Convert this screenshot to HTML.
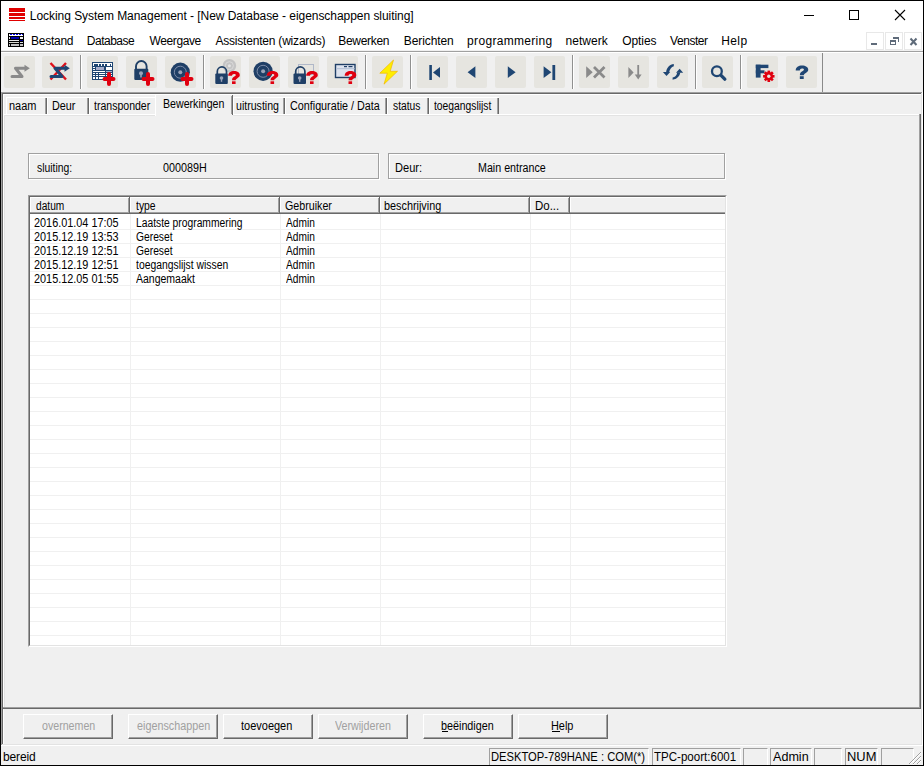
<!DOCTYPE html>
<html><head><meta charset="utf-8">
<style>
*{margin:0;padding:0;box-sizing:border-box}
html,body{width:924px;height:766px;overflow:hidden;background:#F0F0F0;position:relative;font-family:"Liberation Sans",sans-serif}
.a{position:absolute}
.t{position:absolute;white-space:pre;font-family:"Liberation Sans",sans-serif}
.tb{position:absolute;width:31px;height:32px;background:#E6E5E0;border-radius:2px}
.sep{position:absolute;width:1px;top:55px;height:34px;background:#909090;box-shadow:1px 0 0 #FFF}
.tab{position:absolute;top:97px;height:17px;background:#F0F0F0;border-top:1px solid #FFF;border-left:1px solid #FFF}
.tab i{position:absolute;top:0;bottom:0;width:1px;right:0;background:#696969}
.tab b{position:absolute;top:0;bottom:0;width:1px;right:1px;background:#A0A0A0}
.btn{position:absolute;top:714px;width:90px;height:25px;background:#F0F0F0;border-top:1px solid #FFF;border-left:1px solid #FFF;border-right:1px solid #696969;border-bottom:1px solid #696969}
.btn:after{content:"";position:absolute;left:0;top:0;right:0;bottom:0;border-right:1px solid #A0A0A0;border-bottom:1px solid #A0A0A0}
.etch{position:absolute;border:1px solid #A0A0A0;box-shadow:1px 1px 0 #FFF, inset 1px 1px 0 #FFF}
.sp{position:absolute;top:748px;height:17px;border-top:1px solid #A0A0A0;border-left:1px solid #A0A0A0;border-right:1px solid #FFF}
</style></head><body>
<!-- window frame -->
<div class="a" style="left:0;top:0;width:924px;height:50px;background:#FFF"></div>
<div class="a" style="left:0;top:50px;width:924px;height:1px;background:#F0F0F0"></div>
<div class="a" style="left:0;top:51px;width:924px;height:1px;background:#A0A0A0"></div>
<div class="a" style="left:0;top:52px;width:924px;height:1px;background:#FFF"></div>

<!-- MDI client edge -->
<div class="a" style="left:1px;top:92px;width:921px;height:1px;background:#A0A0A0"></div>
<div class="a" style="left:1px;top:93px;width:920px;height:1px;background:#696969"></div>
<div class="a" style="left:1px;top:92px;width:1px;height:653px;background:#A0A0A0"></div>
<div class="a" style="left:2px;top:93px;width:1px;height:651px;background:#696969"></div>
<div class="a" style="left:3px;top:94px;width:918px;height:1px;background:#FFF"></div>
<div class="a" style="left:3px;top:94px;width:1px;height:650px;background:#FFF"></div>
<div class="a" style="left:921px;top:93px;width:1px;height:652px;background:#E3E3E3"></div>
<div class="a" style="left:922px;top:92px;width:1px;height:654px;background:#FFF"></div>
<div class="a" style="left:2px;top:744px;width:920px;height:1px;background:#E3E3E3"></div>

<!-- tab page -->
<div class="a" style="left:4px;top:115px;width:915px;height:1px;background:#E3E3E3"></div>
<div class="a" style="left:4px;top:115px;width:1px;height:592px;background:#E3E3E3"></div>
<div class="a" style="left:3px;top:114px;width:917px;height:1px;background:#FFF"></div>
<div class="a" style="left:919px;top:114px;width:1px;height:594px;background:#A0A0A0"></div>
<div class="a" style="left:920px;top:114px;width:1px;height:595px;background:#696969"></div>
<div class="a" style="left:3px;top:707px;width:917px;height:1px;background:#A0A0A0"></div>
<div class="a" style="left:3px;top:708px;width:918px;height:1px;background:#696969"></div>

<!-- tabs -->
<div class="tab" style="left:6px;width:41px"><b></b><i></i></div>
<div class="tab" style="left:47px;width:42px"><b></b><i></i></div>
<div class="tab" style="left:89px;width:69px"><b></b><i></i></div>
<div class="tab" style="left:233px;width:52px"><b></b><i></i></div>
<div class="tab" style="left:285px;width:102px"><b></b><i></i></div>
<div class="tab" style="left:387px;width:42px"><b></b><i></i></div>
<div class="tab" style="left:429px;width:70px"><b></b><i></i></div>
<div class="tab" style="left:155px;top:94px;width:78px;height:22px;border-bottom:0"><b style="top:1px;bottom:2px"></b><i style="top:0;bottom:1px"></i></div>

<!-- info boxes -->
<div class="etch" style="left:28px;top:153px;width:351px;height:26px"></div>
<div class="etch" style="left:388px;top:153px;width:337px;height:26px"></div>

<!-- list view -->
<div class="a" style="left:28px;top:195px;width:699px;height:452px;background:#FFF;border-top:1px solid #A0A0A0;border-left:1px solid #A0A0A0;border-right:1px solid #FFF;border-bottom:1px solid #FFF"></div>
<div class="a" style="left:29px;top:196px;width:697px;height:450px;border-top:1px solid #696969;border-left:1px solid #696969;border-right:1px solid #E3E3E3;border-bottom:1px solid #E3E3E3"></div>
<svg class="a" style="left:0;top:0" width="924" height="766" shape-rendering="crispEdges">
  <g fill="#F0F0F0">
    <!-- grid horizontal -->
    <path d="M30 229h695v1h-695zM30 243h695v1h-695zM30 257h695v1h-695zM30 271h695v1h-695zM30 285h695v1h-695zM30 299h695v1h-695zM30 313h695v1h-695zM30 327h695v1h-695zM30 341h695v1h-695zM30 355h695v1h-695zM30 369h695v1h-695zM30 383h695v1h-695zM30 397h695v1h-695zM30 411h695v1h-695zM30 425h695v1h-695zM30 439h695v1h-695zM30 453h695v1h-695zM30 467h695v1h-695zM30 481h695v1h-695zM30 495h695v1h-695zM30 509h695v1h-695zM30 523h695v1h-695zM30 537h695v1h-695zM30 551h695v1h-695zM30 565h695v1h-695zM30 579h695v1h-695zM30 593h695v1h-695zM30 607h695v1h-695zM30 621h695v1h-695zM30 635h695v1h-695z"/>
    <path d="M130 214h1v431h-1zM280 214h1v431h-1zM380 214h1v431h-1zM530 214h1v431h-1zM570 214h1v431h-1z"/>
  </g>
  <!-- header -->
  <rect x="30" y="197" width="695" height="16" fill="#F0F0F0"/>
  <g fill="#FFF"><path d="M30 197h695v1h-695zM30 197h1v15h-1zM130 197h1v15h-1zM280 197h1v15h-1zM380 197h1v15h-1zM530 197h1v15h-1zM570 197h1v15h-1z"/></g>
  <g fill="#A0A0A0"><path d="M30 212h695v1h-695zM128 198h1v14h-1zM278 198h1v14h-1zM378 198h1v14h-1zM528 198h1v14h-1zM568 198h1v14h-1z"/></g>
  <g fill="#696969"><path d="M30 213h695v1h-695zM129 197h1v16h-1zM279 197h1v16h-1zM379 197h1v16h-1zM529 197h1v16h-1zM569 197h1v16h-1z"/></g>
</svg>

<!-- buttons -->
<div class="btn" style="left:23px"></div>
<div class="btn" style="left:128px"></div>
<div class="btn" style="left:223px"></div>
<div class="btn" style="left:318px"></div>
<div class="btn" style="left:423px"></div>
<div class="btn" style="left:518px"></div>
<div class="a" style="left:442px;top:731px;width:6px;height:1px;background:#000"></div>
<div class="a" style="left:552px;top:731px;width:8px;height:1px;background:#000"></div>

<!-- status bar -->
<div class="a" style="left:1px;top:745px;width:922px;height:1px;background:#FFF"></div>
<div class="sp" style="left:489px;width:160px"></div>
<div class="sp" style="left:652px;width:89px"></div>
<div class="sp" style="left:743px;width:25px"></div>
<div class="sp" style="left:770px;width:42px"></div>
<div class="sp" style="left:814px;width:28px"></div>
<div class="sp" style="left:845px;width:33px"></div>
<div class="sp" style="left:881px;width:33px"></div>

<!-- toolbar -->
<div class="tb" style="left:4px;top:56px"></div>
<div class="tb" style="left:42px;top:56px"></div>
<div class="sep" style="left:80px"></div>
<div class="tb" style="left:87px;top:56px"></div>
<div class="tb" style="left:126px;top:56px"></div>
<div class="tb" style="left:165px;top:56px"></div>
<div class="sep" style="left:203px"></div>
<div class="tb" style="left:210px;top:56px"></div>
<div class="tb" style="left:249px;top:56px"></div>
<div class="tb" style="left:288px;top:56px"></div>
<div class="tb" style="left:327px;top:56px"></div>
<div class="sep" style="left:365px"></div>
<div class="tb" style="left:372px;top:56px"></div>
<div class="sep" style="left:410px"></div>
<div class="tb" style="left:417px;top:56px"></div>
<div class="tb" style="left:456px;top:56px"></div>
<div class="tb" style="left:495px;top:56px"></div>
<div class="tb" style="left:534px;top:56px"></div>
<div class="sep" style="left:572px"></div>
<div class="tb" style="left:579px;top:56px"></div>
<div class="tb" style="left:618px;top:56px"></div>
<div class="tb" style="left:657px;top:56px"></div>
<div class="sep" style="left:695px"></div>
<div class="tb" style="left:702px;top:56px"></div>
<div class="sep" style="left:740px"></div>
<div class="tb" style="left:747px;top:56px"></div>
<div class="tb" style="left:786px;top:56px"></div>
<div class="a" style="left:822px;top:53px;width:1px;height:39px;background:#8A8A8A"></div>

<!-- ICONS -->
<svg class="a" style="left:0;top:0" width="924" height="766">
  <!-- title icon -->
  <g fill="#E00000" shape-rendering="crispEdges">
    <rect x="9" y="8" width="16" height="4"/>
    <rect x="9" y="13" width="16" height="3"/>
    <rect x="9" y="17" width="16" height="2"/>
    <rect x="9" y="20" width="16" height="1"/>
  </g>
  <!-- title buttons -->
  <g shape-rendering="crispEdges">
    <rect x="804" y="15" width="10" height="1" fill="#000"/>
    <rect x="849.5" y="10.5" width="9" height="9" fill="none" stroke="#000" stroke-width="1"/>
  </g>
  <path d="M895 10L905 20M905 10L895 20" stroke="#000" stroke-width="1.1"/>
  <!-- menu icon -->
  <g shape-rendering="crispEdges">
    <rect x="8" y="33" width="16" height="14" fill="#000"/>
    <rect x="9" y="34" width="14" height="2" fill="#FFF"/>
    <rect x="10" y="34" width="2" height="1" fill="#0000F0"/><rect x="13" y="34" width="2" height="1" fill="#0000F0"/><rect x="16" y="34" width="2" height="1" fill="#0000F0"/><rect x="19" y="34" width="2" height="1" fill="#0000F0"/><rect x="22" y="34" width="1" height="1" fill="#0000F0"/>
    <rect x="9" y="37" width="1" height="2" fill="#E8E8F0"/>
    <rect x="11" y="37" width="8" height="2" fill="#0000B0"/>
    <rect x="20" y="37" width="3" height="2" fill="#F4F4F4"/>
    <rect x="9" y="40" width="10" height="1" fill="#E8E8E8"/>
    <rect x="20" y="40" width="3" height="1" fill="#000090"/>
    <rect x="9" y="42" width="10" height="1" fill="#D8D8D0"/>
    <rect x="20" y="42" width="3" height="1" fill="#E0E0E0"/>
    <rect x="9" y="44" width="1" height="2" fill="#C8C8C8"/>
    <rect x="11" y="44" width="8" height="2" fill="#C0C0C0"/>
    <rect x="20" y="44" width="3" height="2" fill="#C0C0C0"/>
  </g>
  <!-- MDI buttons -->
  <g shape-rendering="crispEdges">
    <rect x="866.5" y="32.5" width="17" height="17" fill="none" stroke="#E8E8E8"/>
    <rect x="885.5" y="32.5" width="17" height="17" fill="none" stroke="#E8E8E8"/>
    <rect x="904.5" y="32.5" width="17" height="17" fill="none" stroke="#E8E8E8"/>
    <rect x="871" y="43" width="6" height="2" fill="#5F6B7A"/>
    <rect x="890" y="40" width="6" height="2" fill="#5F6B7A"/>
    <rect x="890" y="40" width="1" height="5" fill="#5F6B7A"/>
    <rect x="895" y="40" width="1" height="5" fill="#5F6B7A"/>
    <rect x="890" y="44" width="6" height="1" fill="#5F6B7A"/>
    <rect x="893" y="37" width="6" height="2" fill="#5F6B7A"/>
    <rect x="898" y="37" width="1" height="5" fill="#5F6B7A"/>
  </g>
  <path d="M910.5 38.5l6 6.5M916.5 38.5l-6 6.5" stroke="#5F6B7A" stroke-width="2"/>

  <!-- toolbar icons -->
  <!-- 1: gray S arrow -->
  <g stroke="#8A8A8A" stroke-width="3" fill="none" stroke-linecap="round" stroke-linejoin="round">
    <path d="M12 76.5H22L15.5 68.3H25"/>
  </g>
  <path d="M24.5 64.8L29.8 68.3L24.5 71.8Z" fill="#8A8A8A"/>
  <!-- 2: S arrow navy with red X -->
  <path d="M50.5 63L66 79.5M66 63L50.5 79.5" stroke="#E0101A" stroke-width="2.4"/>
  <g stroke="#1F4673" stroke-width="3" fill="none" stroke-linecap="round" stroke-linejoin="round">
    <path d="M51 76.5H62L55 68.3H65"/>
  </g>
  <path d="M64.5 64.8L69.8 68.3L64.5 71.8Z" fill="#1F4673"/>
  <!-- 3: table + -->
  <g shape-rendering="crispEdges">
    <rect x="92" y="62" width="21" height="18" fill="#1F4673"/>
    <rect x="93" y="63" width="19" height="3" fill="#FFF"/>
    <rect x="94" y="64" width="1.5" height="1.5" fill="#1F4673"/><rect x="96.3" y="64" width="2" height="1.5" fill="#1F4673"/><rect x="99.2" y="64" width="2" height="1.5" fill="#1F4673"/><rect x="102.1" y="64" width="2" height="1.5" fill="#1F4673"/><rect x="105" y="64" width="2" height="1.5" fill="#1F4673"/><rect x="109.6" y="64" width="1.5" height="1.5" fill="#1F4673"/>
    <rect x="93" y="67" width="2" height="1" fill="#FFF"/>
    <rect x="96" y="67" width="8" height="3" fill="#A8AECB"/>
    <rect x="106" y="67" width="6" height="3" fill="#FFF"/>
    <rect x="93" y="69" width="2" height="1" fill="#FFF"/>
    <rect x="93" y="71" width="12" height="1" fill="#FFF"/>
    <rect x="106" y="71" width="6" height="1" fill="#A8AECB"/>
    <rect x="93" y="73" width="2" height="1" fill="#FFF"/><rect x="96" y="73" width="2" height="1" fill="#FFF"/><rect x="99" y="73" width="6" height="1" fill="#FFF"/><rect x="106" y="73" width="6" height="1" fill="#FFF"/>
    <rect x="93" y="75" width="2" height="1" fill="#FFF"/><rect x="96" y="75" width="2" height="1" fill="#FFF"/><rect x="99" y="75" width="6" height="1" fill="#FFF"/><rect x="106" y="75" width="6" height="1" fill="#FFF"/>
    <rect x="93" y="77" width="2" height="2" fill="#FFF"/><rect x="96" y="77" width="2" height="2" fill="#FFF"/><rect x="99" y="77" width="5" height="2" fill="#FFF"/>
  </g>
  <g id="plus">
    <path d="M104.5 79H113.5M109 74V84" stroke="#E0000F" stroke-width="4" stroke-linecap="round"/>
  </g>
  <!-- 4: lock + -->
  <path d="M136 69V66.3A5.3 5.3 0 0 1 146.6 66.3V69" stroke="#1F3F66" stroke-width="1.9" fill="none"/>
  <rect x="134.3" y="68.7" width="14" height="11.3" rx="1" fill="#1F3F66"/>
  <circle cx="141" cy="73.3" r="2" fill="#9AA3B8"/><rect x="140.2" y="74" width="1.6" height="3.5" fill="#9AA3B8"/>
  <path d="M143.5 79H152.5M148 74V84" stroke="#E0000F" stroke-width="4" stroke-linecap="round"/>
  <!-- 5: target + -->
  <circle cx="180.3" cy="72.2" r="9.6" fill="#1F3F66"/>
  <circle cx="180.3" cy="72.2" r="6" fill="none" stroke="#7D8CA8" stroke-width="1"/>
  <circle cx="180.3" cy="72.2" r="2" fill="#9AA3B8"/>
  <path d="M182.5 79H191.5M187 74V84" stroke="#E0000F" stroke-width="4" stroke-linecap="round"/>
  <!-- 6: lock + gray target + ? -->
  <circle cx="229.4" cy="65.7" r="6.8" fill="#C4C4C4"/>
  <circle cx="229.4" cy="65.7" r="4" fill="none" stroke="#DADADA" stroke-width="1"/>
  <circle cx="229.4" cy="65.7" r="1.5" fill="#E4E4E4"/>
  <path d="M217.3 74V71.5A4.6 4.6 0 0 1 226.5 71.5V74" stroke="#1F3F66" stroke-width="1.7" fill="none"/>
  <rect x="215.3" y="73.5" width="12.5" height="10.5" rx="1" fill="#1F3F66"/>
  <circle cx="221.5" cy="78" r="1.8" fill="#9AA3B8"/><rect x="220.8" y="78.5" width="1.4" height="3.3" fill="#9AA3B8"/>
  <g id="q" transform="translate(228 71)" fill="#E0000F"><path d="M0.2 4.8C0.2 1.6 2.8 0 6 0C9.4 0 11.8 1.6 11.8 4C11.8 6.6 8.2 7.2 7.6 9.3H4C4 6.6 5.6 5.8 7.1 5C7.7 4.6 7.8 4.2 7.8 3.9C7.8 3.3 7 2.9 6 2.9C4.8 2.9 4.1 3.6 4 4.8Z"/><path d="M4 10.3H7.6V13H4Z"/></g>
  <!-- 7: target + ? -->
  <circle cx="263.1" cy="71.3" r="9.6" fill="#1F3F66"/>
  <circle cx="263.1" cy="71.3" r="6" fill="none" stroke="#7D8CA8" stroke-width="1"/>
  <circle cx="263.1" cy="71.3" r="2" fill="#9AA3B8"/>
  <use href="#q" x="38.5" y="0"/>
  <!-- 8: window + lock + ? -->
  <rect x="298.5" y="64.5" width="15" height="10" fill="none" stroke="#B0B8C8" stroke-width="1"/>
  <path d="M295.7 74V71.5A4.6 4.6 0 0 1 304.9 71.5V74" stroke="#1F3F66" stroke-width="1.7" fill="none"/>
  <rect x="293.5" y="73.5" width="12.5" height="10.5" rx="1" fill="#1F3F66"/>
  <circle cx="299.7" cy="78" r="1.8" fill="#9AA3B8"/><rect x="299" y="78.5" width="1.4" height="3.3" fill="#9AA3B8"/>
  <use href="#q" x="78" y="0"/>
  <!-- 9: window + ? -->
  <rect x="335.5" y="64.5" width="19.5" height="13" fill="#DDE3EE" stroke="#1F3F66" stroke-width="1.4"/>
  <rect x="336" y="68" width="18.5" height="1.2" fill="#B8C4D8"/>
  <rect x="344" y="66" width="3" height="1.2" fill="#1F3F66"/><rect x="348.5" y="66" width="4" height="1.2" fill="#1F3F66"/>
  <use href="#q" x="116.5" y="0"/>
  <!-- 10: lightning -->
  <path d="M393.5 60L379.8 73.2H387.3L384 84.2L397.5 71.3H390.2Z" fill="#FFEE00" stroke="#F2B800" stroke-width=".7"/>
  <!-- 11-14: nav -->
  <g fill="#1F4673">
    <rect x="429.3" y="65" width="2.6" height="15"/>
    <path d="M433 72.4L440 67V77.8Z"/>
    <path d="M467.6 72.2L475.4 66.3V78Z"/>
    <path d="M515.6 72.2L507.8 66.3V78Z"/>
    <path d="M551.4 72.2L543.6 66.3V78Z"/>
    <rect x="552.4" y="65" width="2.8" height="15"/>
  </g>
  <!-- 15: >X gray -->
  <g fill="#8A8A8A">
    <path d="M592.7 72.2L586.2 66.3V78Z"/>
    <path d="M594 67L604.5 77.5M604.5 67L594 77.5" stroke="#8A8A8A" stroke-width="2.8"/>
    <path d="M633.6 72.5L628.4 67V78Z"/>
    <rect x="637.3" y="65" width="1.8" height="11"/>
    <path d="M634.8 74.5H641.6L638.2 79.5Z"/>
  </g>
  <!-- 17: refresh -->
  <path d="M673.8 64C669.8 64.4 666.6 67.6 666.1 72.2L669.2 72.2C669.6 69.4 671.4 67 673.8 66.3Z" fill="#1F4673"/>
  <path d="M662.9 72L670.2 72L666.5 76Z" fill="#1F4673"/>
  <path d="M672.6 79.7C676.7 79.4 679.8 76.3 680.3 72.6L677.2 72.6C676.8 75.4 675 77.4 672.6 77.6Z" fill="#1F4673"/>
  <path d="M676 72.8L683.2 72.8L679.6 68.8Z" fill="#1F4673"/>
  <!-- 18: search -->
  <circle cx="716.9" cy="71.2" r="4.9" fill="none" stroke="#1F4673" stroke-width="2.3"/>
  <path d="M721.3 75.6L724.8 79.1" stroke="#1F4673" stroke-width="3.4" stroke-linecap="round"/>
  <!-- 19: F gear -->
  <g fill="#1F4673">
    <rect x="755.8" y="64.7" width="12.6" height="3.4"/>
    <rect x="755.8" y="64.7" width="4.8" height="12.9"/>
    <rect x="755.8" y="70.3" width="8.7" height="3"/>
  </g>
  <g transform="translate(768.8 76.3)" fill="#E0000F">
    <circle r="4.3"/>
    <g id="tooth"><rect x="-1.3" y="-5.7" width="2.6" height="11.4"/></g>
    <use href="#tooth" transform="rotate(45)"/><use href="#tooth" transform="rotate(90)"/><use href="#tooth" transform="rotate(135)"/>
    <circle r="1.7" fill="#E6E5E0"/>
  </g>
  <!-- 20: ? navy -->
  <g transform="translate(795.5 65.5) scale(1.08 1.04)" fill="#1F4673"><path d="M0.2 4.8C0.2 1.6 2.8 0 6 0C9.4 0 11.8 1.6 11.8 4C11.8 6.6 8.2 7.2 7.6 9.3H4C4 6.6 5.6 5.8 7.1 5C7.7 4.6 7.8 4.2 7.8 3.9C7.8 3.3 7 2.9 6 2.9C4.8 2.9 4.1 3.6 4 4.8Z"/><path d="M4 10.3H7.6V13H4Z"/></g>

  <!-- size grip -->
  <g stroke="#A0A0A0" stroke-width="1">
    <path d="M909 764L921 752M913 764L921 756M917 764L921 760"/>
  </g>
  <g stroke="#FFF" stroke-width="1">
    <path d="M910 764L921 753M914 764L921 757M918 764L921 761"/>
  </g>
</svg>


<div class='t' style='left:29.80px;top:10px;font-size:12px;line-height:12px;letter-spacing:-0.045px;color:#000;'>Locking System Management - [New Database - eigenschappen sluiting]</div>
<div class='t' style='left:31.00px;top:35px;font-size:12px;line-height:12px;letter-spacing:-0.250px;color:#000;'>Bestand</div>
<div class='t' style='left:86.80px;top:35px;font-size:12px;line-height:12px;letter-spacing:-0.500px;color:#000;'>Database</div>
<div class='t' style='left:149.50px;top:35px;font-size:12px;line-height:12px;letter-spacing:-0.386px;color:#000;'>Weergave</div>
<div class='t' style='left:215.40px;top:35px;font-size:12px;line-height:12px;letter-spacing:-0.200px;color:#000;'>Assistenten (wizards)</div>
<div class='t' style='left:338.30px;top:35px;font-size:12px;line-height:12px;letter-spacing:-0.314px;color:#000;'>Bewerken</div>
<div class='t' style='left:403.80px;top:35px;font-size:12px;line-height:12px;letter-spacing:-0.100px;color:#000;'>Berichten</div>
<div class='t' style='left:467.10px;top:35px;font-size:12px;line-height:12px;letter-spacing:0.317px;color:#000;'>programmering</div>
<div class='t' style='left:565.50px;top:35px;font-size:12px;line-height:12px;letter-spacing:0.033px;color:#000;'>netwerk</div>
<div class='t' style='left:622.30px;top:35px;font-size:12px;line-height:12px;letter-spacing:-0.100px;color:#000;'>Opties</div>
<div class='t' style='left:670.00px;top:35px;font-size:12px;line-height:12px;letter-spacing:-0.433px;color:#000;'>Venster</div>
<div class='t' style='left:721.30px;top:35px;font-size:12px;line-height:12px;letter-spacing:0.367px;color:#000;'>Help</div>
<div class='t' style='left:9.49px;top:100px;font-size:12px;line-height:12px;transform:scaleX(0.9143);transform-origin:0 0;color:#000;'>naam</div>
<div class='t' style='left:52.40px;top:100px;font-size:12px;line-height:12px;transform:scaleX(0.9000);transform-origin:0 0;color:#000;'>Deur</div>
<div class='t' style='left:94.40px;top:100px;font-size:12px;line-height:12px;transform:scaleX(0.8781);transform-origin:0 0;color:#000;'>transponder</div>
<div class='t' style='left:163.01px;top:98px;font-size:12px;line-height:12px;transform:scaleX(0.8853);transform-origin:0 0;color:#000;'>Bewerkingen</div>
<div class='t' style='left:235.72px;top:100px;font-size:12px;line-height:12px;transform:scaleX(0.8830);transform-origin:0 0;color:#000;'>uitrusting</div>
<div class='t' style='left:289.80px;top:100px;font-size:12px;line-height:12px;transform:scaleX(0.8970);transform-origin:0 0;color:#000;'>Configuratie / Data</div>
<div class='t' style='left:392.60px;top:100px;font-size:12px;line-height:12px;transform:scaleX(0.8562);transform-origin:0 0;color:#000;'>status</div>
<div class='t' style='left:434.30px;top:100px;font-size:12px;line-height:12px;transform:scaleX(0.8597);transform-origin:0 0;color:#000;'>toegangslijst</div>
<div class='t' style='left:36.80px;top:162px;font-size:12px;line-height:12px;transform:scaleX(0.8650);transform-origin:0 0;color:#000;'>sluiting:</div>
<div class='t' style='left:163.20px;top:162px;font-size:12px;line-height:12px;transform:scaleX(0.8979);transform-origin:0 0;color:#000;'>000089H</div>
<div class='t' style='left:395.48px;top:162px;font-size:12px;line-height:12px;transform:scaleX(0.9222);transform-origin:0 0;color:#000;'>Deur:</div>
<div class='t' style='left:477.81px;top:162px;font-size:12px;line-height:12px;transform:scaleX(0.8907);transform-origin:0 0;color:#000;'>Main entrance</div>
<div class='t' style='left:35.50px;top:200px;font-size:12px;line-height:12px;transform:scaleX(0.8485);transform-origin:0 0;color:#000;'>datum</div>
<div class='t' style='left:135.50px;top:200px;font-size:12px;line-height:12px;transform:scaleX(0.8636);transform-origin:0 0;color:#000;'>type</div>
<div class='t' style='left:284.81px;top:200px;font-size:12px;line-height:12px;transform:scaleX(0.8904);transform-origin:0 0;color:#000;'>Gebruiker</div>
<div class='t' style='left:384.30px;top:200px;font-size:12px;line-height:12px;transform:scaleX(0.9032);transform-origin:0 0;color:#000;'>beschrijving</div>
<div class='t' style='left:535.24px;top:200px;font-size:12px;line-height:12px;transform:scaleX(0.9565);transform-origin:0 0;color:#000;'>Do...</div>
<div class='t' style='left:34.29px;top:217px;font-size:12px;line-height:12px;transform:scaleX(0.9054);transform-origin:0 0;color:#000;'>2016.01.04 17:05</div>
<div class='t' style='left:136.24px;top:217px;font-size:12px;line-height:12px;transform:scaleX(0.8577);transform-origin:0 0;color:#000;'>Laatste programmering</div>
<div class='t' style='left:286.20px;top:217px;font-size:12px;line-height:12px;transform:scaleX(0.8485);transform-origin:0 0;color:#000;'>Admin</div>
<div class='t' style='left:34.29px;top:231px;font-size:12px;line-height:12px;transform:scaleX(0.9054);transform-origin:0 0;color:#000;'>2015.12.19 13:53</div>
<div class='t' style='left:135.64px;top:231px;font-size:12px;line-height:12px;transform:scaleX(0.8571);transform-origin:0 0;color:#000;'>Gereset</div>
<div class='t' style='left:286.20px;top:231px;font-size:12px;line-height:12px;transform:scaleX(0.8485);transform-origin:0 0;color:#000;'>Admin</div>
<div class='t' style='left:34.29px;top:245px;font-size:12px;line-height:12px;transform:scaleX(0.9054);transform-origin:0 0;color:#000;'>2015.12.19 12:51</div>
<div class='t' style='left:135.64px;top:245px;font-size:12px;line-height:12px;transform:scaleX(0.8571);transform-origin:0 0;color:#000;'>Gereset</div>
<div class='t' style='left:286.20px;top:245px;font-size:12px;line-height:12px;transform:scaleX(0.8485);transform-origin:0 0;color:#000;'>Admin</div>
<div class='t' style='left:34.29px;top:259px;font-size:12px;line-height:12px;transform:scaleX(0.9054);transform-origin:0 0;color:#000;'>2015.12.19 12:51</div>
<div class='t' style='left:136.20px;top:259px;font-size:12px;line-height:12px;transform:scaleX(0.8642);transform-origin:0 0;color:#000;'>toegangslijst wissen</div>
<div class='t' style='left:286.20px;top:259px;font-size:12px;line-height:12px;transform:scaleX(0.8485);transform-origin:0 0;color:#000;'>Admin</div>
<div class='t' style='left:34.29px;top:273px;font-size:12px;line-height:12px;transform:scaleX(0.9054);transform-origin:0 0;color:#000;'>2015.12.05 01:55</div>
<div class='t' style='left:136.30px;top:273px;font-size:12px;line-height:12px;transform:scaleX(0.8746);transform-origin:0 0;color:#000;'>Aangemaakt</div>
<div class='t' style='left:286.20px;top:273px;font-size:12px;line-height:12px;transform:scaleX(0.8485);transform-origin:0 0;color:#000;'>Admin</div>
<div class='t' style='left:41.60px;top:720px;font-size:12px;line-height:12px;transform:scaleX(0.8864);transform-origin:0 0;color:#A0A0A0;'>overnemen</div>
<div class='t' style='left:136.60px;top:720px;font-size:12px;line-height:12px;transform:scaleX(0.8988);transform-origin:0 0;color:#A0A0A0;'>eigenschappen</div>
<div class='t' style='left:241.00px;top:720px;font-size:12px;line-height:12px;transform:scaleX(0.9161);transform-origin:0 0;color:#000;'>toevoegen</div>
<div class='t' style='left:334.90px;top:720px;font-size:12px;line-height:12px;transform:scaleX(0.8903);transform-origin:0 0;color:#A0A0A0;'>Verwijderen</div>
<div class='t' style='left:440.90px;top:720px;font-size:12px;line-height:12px;transform:scaleX(0.8982);transform-origin:0 0;color:#000;'>beëindigen</div>
<div class='t' style='left:551.09px;top:720px;font-size:12px;line-height:12px;transform:scaleX(0.9087);transform-origin:0 0;color:#000;'>Help</div>
<div class='t' style='left:491.07px;top:751px;font-size:12px;line-height:12px;transform:scaleX(0.9329);transform-origin:0 0;color:#000;'>DESKTOP-789HANE : COM(*)</div>
<div class='t' style='left:654.40px;top:751px;font-size:12px;line-height:12px;transform:scaleX(0.9624);transform-origin:0 0;color:#000;'>TPC-poort:6001</div>
<div class='t' style='left:772.70px;top:751px;font-size:12px;line-height:12px;transform:scaleX(1.0485);transform-origin:0 0;color:#000;'>Admin</div>
<div class='t' style='left:846.52px;top:751px;font-size:12px;line-height:12px;transform:scaleX(1.0760);transform-origin:0 0;color:#000;'>NUM</div>
<div class='t' style='left:3.00px;top:751px;font-size:12px;line-height:12px;letter-spacing:-0.120px;color:#000;'>bereid</div>

<!-- window border -->
<div class="a" style="left:0;top:0;width:924px;height:766px;border:1px solid #000"></div>
</body></html>
